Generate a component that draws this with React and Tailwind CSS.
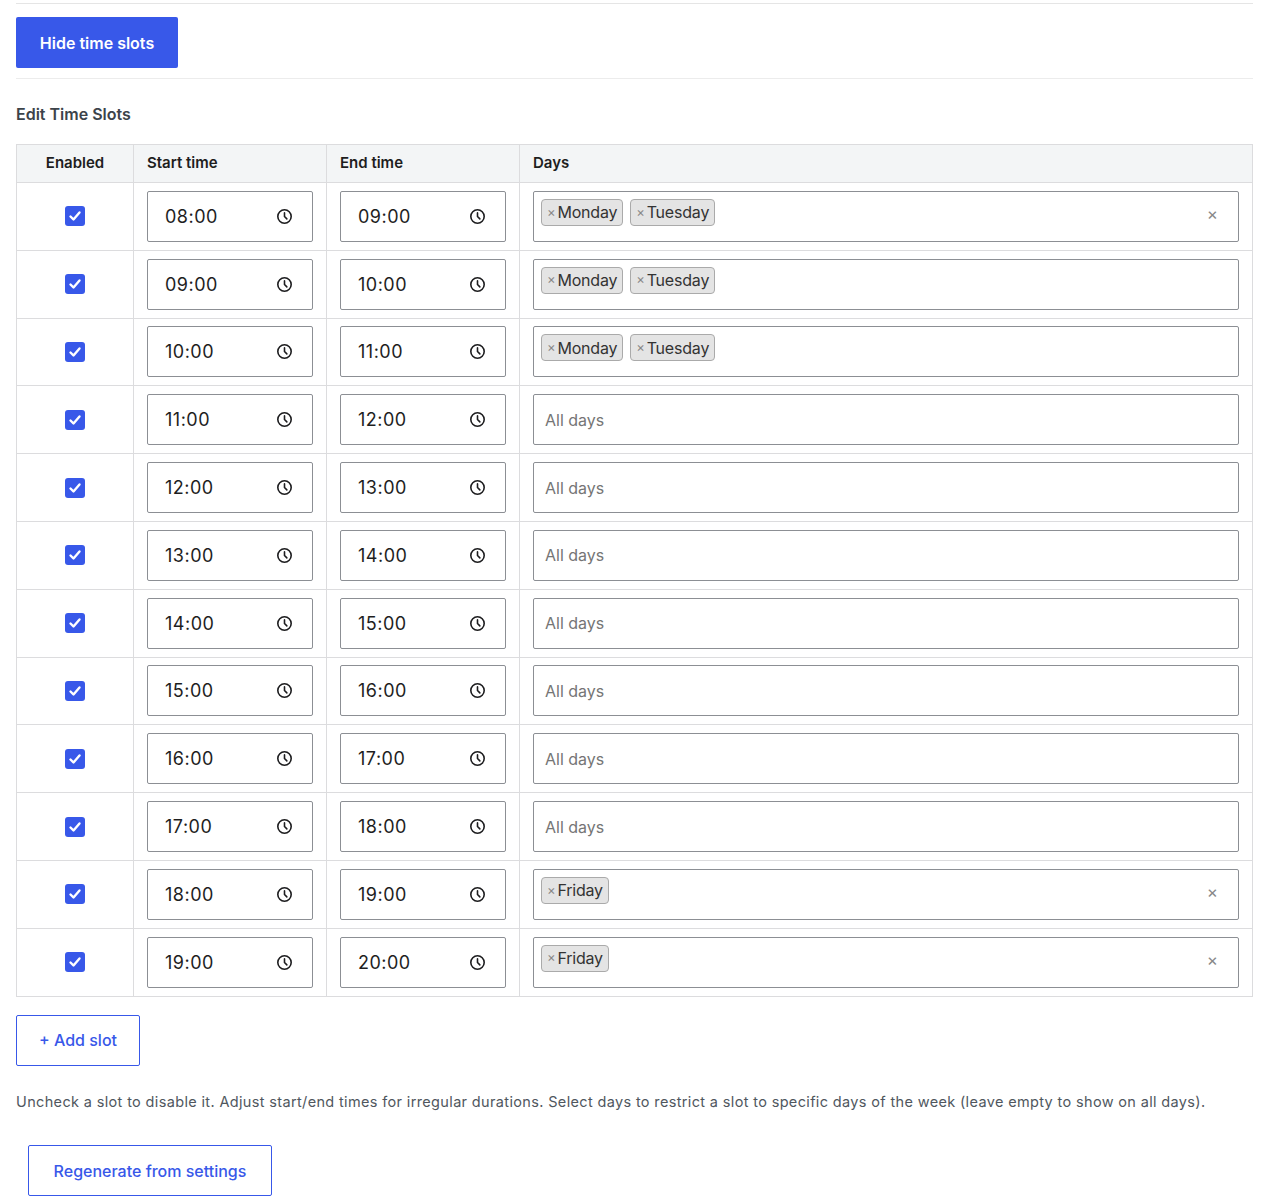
import React from "react";

const rows = [
  ["08:00", "09:00", ["Monday", "Tuesday"], true],
  ["09:00", "10:00", ["Monday", "Tuesday"], false],
  ["10:00", "11:00", ["Monday", "Tuesday"], false],
  ["11:00", "12:00", [], false],
  ["12:00", "13:00", [], false],
  ["13:00", "14:00", [], false],
  ["14:00", "15:00", [], false],
  ["15:00", "16:00", [], false],
  ["16:00", "17:00", [], false],
  ["17:00", "18:00", [], false],
  ["18:00", "19:00", ["Friday"], true],
  ["19:00", "20:00", ["Friday"], true],
];

const Clock = () => (
  <svg width="17" height="17" viewBox="0 0 16 16" fill="none" stroke="#1d1d1f" strokeWidth="1.5">
    <circle cx="8" cy="8" r="6.3" />
    <path d="M8 4.6V8l2.2 2.2" strokeLinecap="round" />
  </svg>
);

const Check = () => (
  <div className="w-[20px] h-[20px] rounded-[3px] bg-[#3858e9] flex items-center justify-center">
    <svg width="14" height="14" viewBox="0 0 14 14" fill="none" stroke="white" strokeWidth="2.4" strokeLinecap="round" strokeLinejoin="round">
      <path d="M2.5 7.5l3 3 6-7" />
    </svg>
  </div>
);

const TimeInput = ({ v }) => (
  <div className="h-[51px] border border-[#8c8f94] rounded-[2px] flex items-center justify-between pl-[17px] pr-[19px] text-[18px] text-[#1e1e1e] tracking-[0.5px]">
    <span>{v}</span>
    <Clock />
  </div>
);

export default function App() {
  return (
    <div className="bg-white w-[1261px] min-h-[1200px] px-[16px] pt-[3px] text-[#1e1e1e]" style={{ fontFamily: "Inter, 'Liberation Sans', sans-serif" }}>
      <div className="border-t border-[#e5e5e5] w-[1237px]" />
      <div className="pt-[13px] pb-[10px] border-b border-[#ececec] w-[1237px]">
        <button className="bg-[#3858e9] text-white text-[16px] font-semibold rounded-[2px] w-[162px] h-[51px]">Hide time slots</button>
      </div>
      <h3 className="mt-[23px] text-[16px] font-semibold text-[#3c434a]">Edit Time Slots</h3>
      <table className="mt-[18px] w-[1237px] border-collapse border border-[#dcdcde] table-fixed text-[15px]">
        <thead>
          <tr className="bg-[#f3f5f6] h-[38px]">
            <th className="w-[117px] border border-[#dcdcde] font-semibold text-center">Enabled</th>
            <th className="w-[193px] border border-[#dcdcde] font-semibold text-left pl-[13px]">Start time</th>
            <th className="w-[193px] border border-[#dcdcde] font-semibold text-left pl-[13px]">End time</th>
            <th className="border border-[#dcdcde] font-semibold text-left pl-[13px]">Days</th>
          </tr>
        </thead>
        <tbody>
          {rows.map(([s, e, days, x], i) => (
            <tr key={i} className="h-[67.8px]">
              <td className="border border-[#dcdcde]"><div className="flex justify-center"><Check /></div></td>
              <td className="border border-[#dcdcde] px-[13px]"><TimeInput v={s} /></td>
              <td className="border border-[#dcdcde] px-[13px]"><TimeInput v={e} /></td>
              <td className="border border-[#dcdcde] px-[13px]">
                <div className="h-[51px] border border-[#8c8f94] rounded-[2px] flex items-start relative">
                  {days.length === 0 ? (
                    <span className="self-center pl-[11px] text-[16px] text-[#757575]">All days</span>
                  ) : (
                    <div className="flex gap-[7px] pl-[7px] pt-[7px]">
                      {days.map((d) => (
                        <span key={d} className="h-[27px] flex items-center bg-[#e4e4e4] border border-[#aaa] rounded-[4px] px-[5px] text-[16px] text-[#333] tracking-[-0.2px]">
                          <span className="text-[#888] text-[13px] mr-[2px]">×</span>{d}
                        </span>
                      ))}
                    </div>
                  )}
                  {x && <span className="absolute right-[20px] top-[10px] text-[#888] text-[17px]">×</span>}
                </div>
              </td>
            </tr>
          ))}
        </tbody>
      </table>
      <button className="mt-[18px] w-[124px] h-[51px] border border-[#3858e9] rounded-[2px] text-[#3858e9] text-[16px] font-medium">+ Add slot</button>
      <p className="mt-[25px] text-[14.5px] tracking-[0.35px] text-[#50575e]">Uncheck a slot to disable it. Adjust start/end times for irregular durations. Select days to restrict a slot to specific days of the week (leave empty to show on all days).</p>
      <button className="mt-[33px] ml-[12px] w-[244px] h-[51px] border border-[#3858e9] rounded-[2px] text-[#3858e9] text-[16px] font-medium">Regenerate from settings</button>
    </div>
  );
}
